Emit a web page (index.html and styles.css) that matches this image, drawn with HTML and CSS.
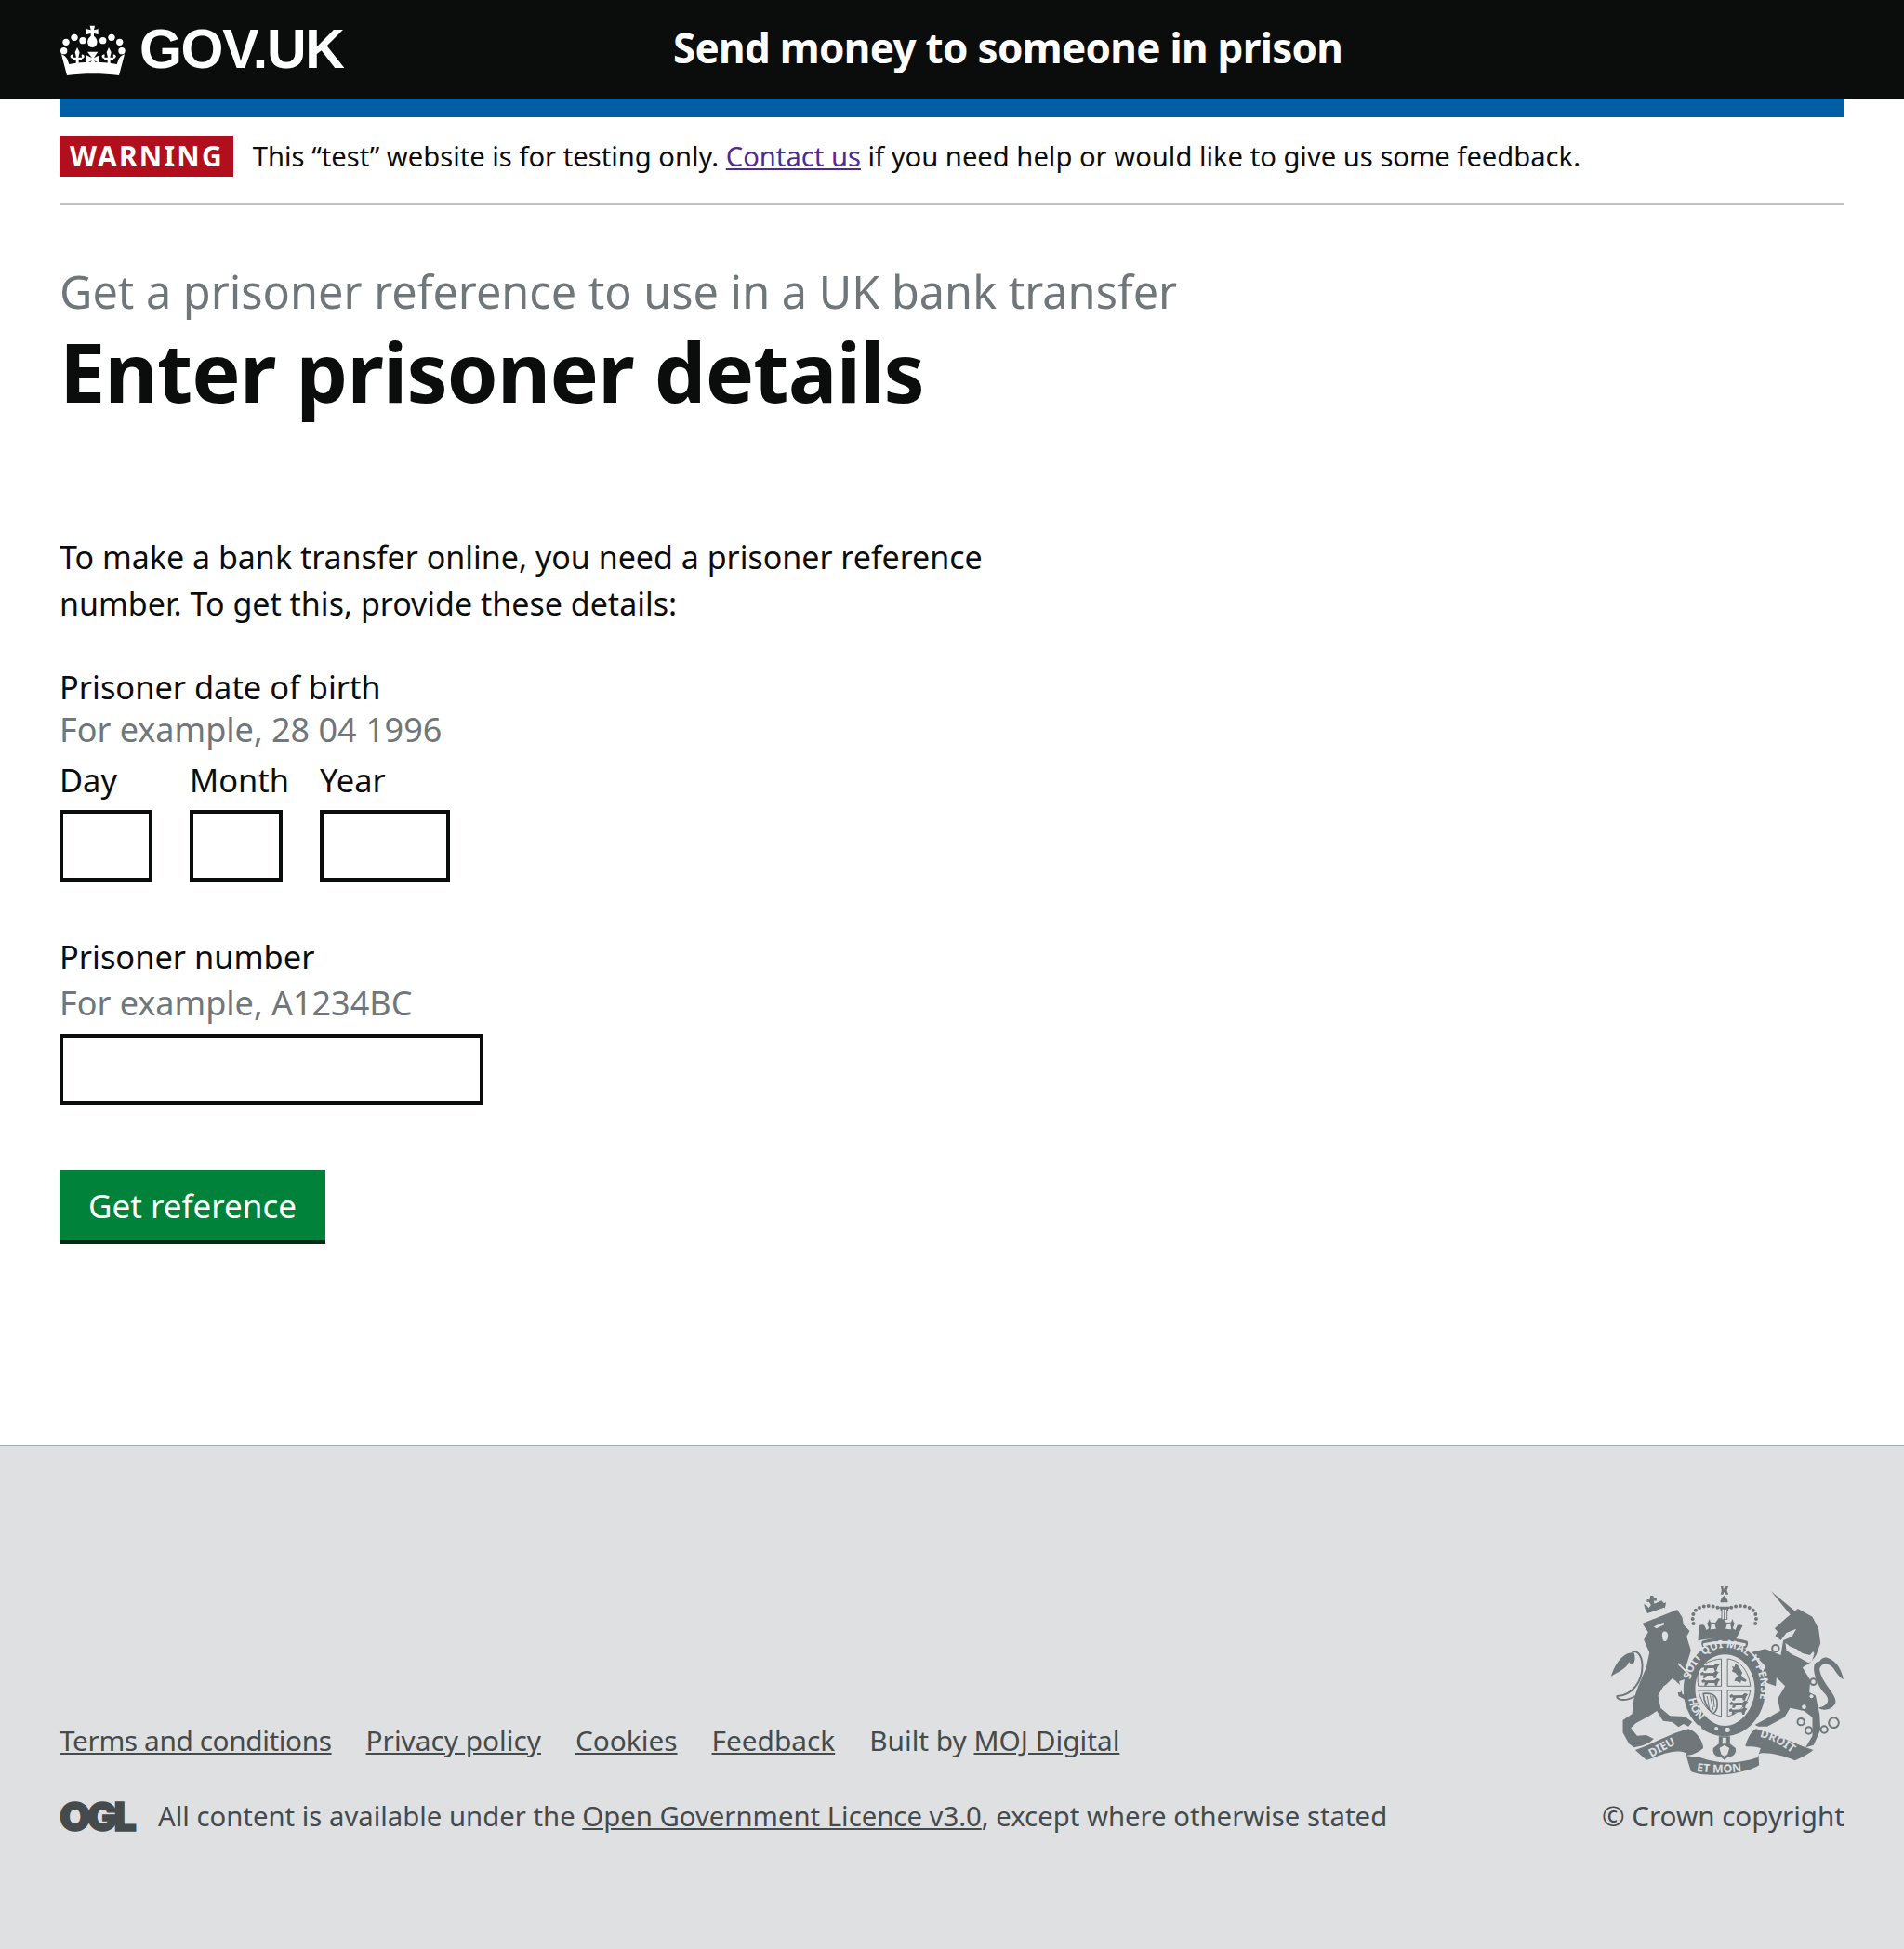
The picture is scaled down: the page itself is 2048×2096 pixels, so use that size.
FILE: index.html
```html
<!DOCTYPE html>
<html lang="en">
<head>
  <meta charset="UTF-8">
  <title>Enter prisoner details - Send money to someone in prison</title>
  <link rel="stylesheet" href="styles.css">
</head>
<body>

  <header class="site-header">
    <a class="logo" href="#">
      <svg class="logo-crown" viewBox="0 0 240 180" aria-hidden="true">
        <g fill="#fff">
          <path d="M110 14h16l-3 14 14-3v17l-14-3v8c8 6 12 14 10 24-2 8-8 13-15 13s-13-5-15-13c-2-10 2-18 10-24v-8l-14 3V25l14 3z"/>
          <circle cx="60" cy="52" r="11"/>
          <circle cx="87" cy="62" r="11"/>
          <circle cx="152" cy="62" r="11"/>
          <circle cx="180" cy="52" r="11"/>
          <circle cx="33" cy="67" r="11"/>
          <circle cx="206" cy="67" r="11"/>
          <circle cx="26" cy="95" r="11"/>
          <circle cx="213" cy="95" r="11"/>
          <!-- fleurs and middle cross -->
          <path d="M69 84l8 16-4 16h11l-1-9c5-2 10 2 9 7-1 4-4 6-7 6l-1 3h-10v14h-9v-14H55l-1-3c-3 0-6-2-7-6-1-5 4-9 9-7l-1 9h11l-4-16z"/>
          <path d="M171 84l8 16-4 16h11l-1-9c5-2 10 2 9 7-1 4-4 6-7 6l-1 3h-10v14h-9v-14h-10l-1-3c-3 0-6-2-7-6-1-5 4-9 9-7l-1 9h11l-4-16z"/>
          <path d="M102 98h34l-13 20 18-9v26l-18-9 11 14h-28l11-14-18 9v-26l18 9z"/>
          <!-- band -->
          <path d="M18 106c12 4 19 12 22 24l3 8c24-5 48-7 76-7s52 2 78 7l3-8c3-12 10-20 22-24l-18 68c-52-7-116-7-168 0z"/>
        </g>
      </svg>
      <span class="logo-text">GOV.UK</span>
    </a>
    <span class="service-name">Send money to someone in prison</span>
  </header>

  <div class="wrapper">
    <div class="phase-bar"></div>
    <div class="phase-banner">
      <strong class="phase-tag">WARNING</strong>
      <span>This “test” website is for testing only. <a href="#">Contact us</a> if you need help or would like to give us some feedback.</span>
    </div>

    <main class="content">
      <span class="caption">Get a prisoner reference to use in a UK bank transfer</span>
      <h1>Enter prisoner details</h1>

      <p class="lede">To make a bank transfer online, you need a prisoner reference number. To get this, provide these details:</p>

      <form>
        <fieldset class="dob">
          <div class="label">Prisoner date of birth</div>
          <div class="hint">For example, 28 04 1996</div>
          <div class="date-fields">
            <label class="date-item"><span>Day</span><input class="input-day" type="text"></label>
            <label class="date-item"><span>Month</span><input class="input-month" type="text"></label>
            <label class="date-item date-item-year"><span>Year</span><input class="input-year" type="text"></label>
          </div>
        </fieldset>

        <div class="number-field">
          <label class="label" for="number">Prisoner number</label>
          <div class="hint hint-number">For example, A1234BC</div>
          <input class="input-number" id="number" type="text">
        </div>

        <button class="button" type="button">Get reference</button>
      </form>
    </main>
  </div>

  <footer class="site-footer">
    <div class="footer-meta">
      <ul class="footer-links">
        <li class="footer-terms"><a href="#">Terms and conditions</a></li>
        <li><a href="#">Privacy policy</a></li>
        <li><a href="#">Cookies</a></li>
        <li><a href="#">Feedback</a></li>
        <li>Built by <a href="#">MOJ Digital</a></li>
      </ul>
      <div class="licence">
        <span class="ogl">OGL</span>
        <span>All content is available under the <a href="#">Open Government Licence v3.0</a>, except where otherwise stated</span>
      </div>
    </div>
    <div class="copyright">
      <svg class="crest" viewBox="100 75 755 615" aria-hidden="true">
        <defs>
          <path id="garter-ring" d="M358 384C368 318 420 276 470 276C530 276 574 322 584 388C590 440 570 490 530 532"/>
          <path id="garter-left" d="M352 440C356 470 370 494 392 510"/>
          <path id="ribbon-left" d="M232 630C262 612 305 590 345 572"/>
          <path id="ribbon-right" d="M582 564C625 572 670 600 704 634"/>
          <path id="ribbon-mid" d="M378 674C430 682 500 682 558 668"/>
          <path id="passant" d="M0 9L8 3L12 8L42 7L50 0L60 5L54 12L50 24H44L42 16H22L16 24H9L11 14L3 15Z"/>
        </defs>
        <g fill="#6f777b">
          <!-- lion -->
          <path d="M203 198L316 153L332 178L336 202L356 222L346 240L360 285L346 330L340 378L322 384L332 425L362 440L346 446L320 432L310 380L272 400L254 430L262 470L292 496L340 498L364 515L352 530L336 522L320 532L300 516L270 512L250 480L226 496L182 520L166 535L186 560L216 558L240 570L226 582L204 592L176 598L160 586L140 550L140 510L170 490L176 440L190 400L216 340L226 292L208 250L222 226Z"/>
          <path d="M176 292C140 288 115 330 102 368C130 352 150 345 160 322C170 340 186 322 176 292Z"/>
          <path d="M229 108h10l1 9 9-1v9l-9-1 2 10 10-4 14-6 6 8 8-2-4 18-56 18-8-16-4-14 8 2 8 10 7-10-6-10-7 1v-9l9 1z"/>
          <!-- unicorn -->
          <path d="M618 93L698 160L685 175Z"/>
          <path d="M630 214L670 178L705 150L752 176L772 215L778 262L764 300L748 322L720 340L745 380L742 420L762 430L775 490L778 540L756 590L730 598L752 560L752 500L725 480L680 470L662 500L606 530L578 530L566 525L612 500L648 480L640 440L664 400L636 372L634 400L606 390L590 360L600 335L566 300L556 290L600 280L650 300L658 252L686 240L700 215L668 228L650 252L632 238L640 224Z"/>
          <path d="M775 320C740 320 762 390 788 420C815 445 800 465 770 470C790 482 815 475 826 455C835 430 780 390 775 345C782 320 810 325 825 350C835 365 845 375 852 378C848 355 835 320 800 308C790 305 780 310 775 320Z"/>
          <!-- crown -->
          <path d="M456 78h8l1 9 8-9h8l-5 13 5 13h-8l-7-8-2 8h-8l3-13z"/>
          <path d="M467 108c8 6 12 12 12 22h-24c0-10 4-16 12-22zM452 143h32v7h-6v36h-20v-36h-6z"/>
          <path d="M386 205c8-4 14-4 18 0l6 14 8-6-4-10c-3-4-1-8 2-10l3-10 4 10c4 2 5 6 2 10l-2 14 18-2-4-14h-10v-7l12 1 10-14 15 0 10 14 12-1v7h-10l-4 14 18 2-2-14c-3-4-2-8 2-10l4-10 3 10c3 2 5 6 2 10l-4 10 8 6 6-14c4-4 10-4 18 0l-24 48c-36-8-88-8-120 0z"/>
          <path d="M396 254c40-14 104-14 146 0 4 6 2 18-6 24-36-12-96-12-134 0-8-6-10-18-6-24z"/>
          <!-- garter ring -->
          <path fill-rule="evenodd" d="M468 258c74 0 132 70 132 154 0 86-62 150-132 150S336 498 336 412c0-84 58-154 132-154zM470 298c-54 0-96 50-96 112 0 62 46 118 96 118s96-56 96-118c0-62-42-112-96-112z"/>
          <!-- ribbons -->
          <path d="M180 606C230 590 300 550 352 538C390 552 400 590 400 600C370 625 355 620 345 625L390 630C450 652 510 652 575 630L585 600C552 590 535 600 536 590C545 565 555 545 570 538C620 548 700 590 755 606C730 625 712 632 696 640C650 620 590 610 578 620L580 655C545 680 420 700 360 675L342 615C300 600 250 630 216 638Z"/>
          <!-- fleur -->
          <path d="M450 562h36v24l18 14c4 16-8 30-22 26l-14 12-14-12c-14 4-26-10-22-26l18-14z"/>
        </g>
        <g fill="none" stroke="#6f777b" stroke-width="6">
          <path d="M180 432C140 455 118 440 122 432C170 430 205 385 203 330C200 290 180 285 170 290"/>
          <circle cx="633" cy="278" r="11"/>
          <circle cx="622" cy="361" r="11"/>
          <circle cx="755" cy="386" r="10"/>
          <circle cx="715" cy="515" r="11"/>
          <circle cx="740" cy="543" r="11"/>
          <circle cx="790" cy="540" r="11"/>
          <circle cx="821" cy="518" r="16"/>
        </g>
        <!-- crown pearls -->
        <g fill="none" stroke="#6f777b" stroke-width="12" stroke-linecap="round" stroke-dasharray="0 15">
          <path d="M368 198C354 150 400 126 462 152"/>
          <path d="M568 198C582 150 536 126 474 152"/>
        </g>
        <g fill="#dee0e2">
          <circle cx="749" cy="433" r="6"/>
          <circle cx="725" cy="467" r="7"/>
          <circle cx="385" cy="535" r="9"/>
          <circle cx="478" cy="541" r="8"/>
          <circle cx="442" cy="537" r="6"/>
          <path d="M665 260l15 12 20 8 20 14 24 6 10-12 4 6-8 28-12 2-28-16-24-10-18-14z"/>
          <path d="M461 152h5v32h-5zM470 152h5v32h-5z"/>
          <path d="M400 262c40-10 96-10 136 0 2 4 1 7-2 9-36-10-96-10-132 0-3-2-4-5-2-9z"/>
          <path d="M240 208l32-14 2 8-26 12zM270 225c8-4 16 0 16 12s-6 20-12 18-10-24-4-30z"/>
          <path d="M212 168l62-22 2 6-60 22z"/>
          <path d="M270 405l30-30 36 30-10 15-30 0-18 20zM320 325l42 40-5 4-40-40z"/>
          <path d="M462 566h12v20h-12zM452 600l16-10 16 10-6 20-10 6-10-6z"/>
        </g>
        <!-- shield quarters -->
        <g fill="none" stroke="#6f777b" stroke-width="3">
          <path d="M458 312C425 315 398 328 384 345C381 365 381 385 384 400H458Z"/>
          <path d="M478 312C515 316 545 345 552 400H478Z"/>
          <path d="M384 414H458V498C420 490 395 460 384 414Z"/>
          <path d="M478 414H552C545 455 515 490 478 498Z"/>
        </g>
        <g fill="#6f777b">
          <use href="#passant" x="392" y="326"/>
          <use href="#passant" x="390" y="350"/>
          <use href="#passant" x="394" y="374"/>
          <use href="#passant" x="484" y="422"/>
          <use href="#passant" x="484" y="446"/>
          <use href="#passant" x="482" y="468"/>
          <path d="M492 336l8 2 4-12 8 8 8 12 6 12-4 6 8 10 10 6-4 6-14-4-2 8-12-6-8 0 4-10 8-6-8-10-12-6 4-8z"/>
        </g>
        <g fill="none" stroke="#6f777b" stroke-width="5">
          <path d="M400 424C440 420 448 440 444 470C440 484 432 490 428 486C412 470 402 450 400 424Z"/>
        </g>
        <path d="M412 432l8 42M422 430l10 48M432 432l4 36" fill="none" stroke="#6f777b" stroke-width="3"/>
        <g class="crest-text">
          <text><textPath href="#garter-ring" startOffset="1%">SOIT QUI MAL Y PENSE</textPath></text>
          <text><textPath href="#garter-left">HONI</textPath></text>
          <text class="ribbon-text"><textPath href="#ribbon-left">DIEU</textPath></text>
          <text class="ribbon-text"><textPath href="#ribbon-right">DROIT</textPath></text>
          <text class="ribbon-text"><textPath href="#ribbon-mid">ET MON</textPath></text>
        </g>
      </svg>
      <div class="copyright-text">© Crown copyright</div>
    </div>
  </footer>

</body>
</html>
```

FILE: styles.css
```css
body {
  margin: 0;
  background: #fff;
  color: #0b0c0c;
  font-family: "Noto Sans", sans-serif;
  font-size: 32px;
}

a {
  color: inherit;
}

.site-header {
  display: flex;
  align-items: center;
  height: 106px;
  padding: 0 64px;
  background: #0b0c0c;
  color: #fff;
}

.logo {
  display: flex;
  align-items: center;
  gap: 10px;
  width: 660px;
  color: #fff;
  text-decoration: none;
}

.logo-crown {
  width: 80px;
  height: 60px;
  margin-left: -4px;
}

.logo-text {
  font-family: "Liberation Sans", sans-serif;
  font-size: 59px;
  font-weight: 700;
  letter-spacing: -1.3px;
  line-height: 1;
}

.service-name {
  padding-bottom: 4px;
  font-size: 44px;
  font-weight: 700;
  letter-spacing: -0.7px;
}

.wrapper {
  margin: 0 64px;
  min-height: 1448px;
}

.phase-bar {
  height: 20px;
  background: #005ea5;
}

.phase-banner {
  display: flex;
  align-items: center;
  gap: 21px;
  height: 94px;
  padding-bottom: 8px;
  border-bottom: 2px solid #bfc1c3;
  box-sizing: border-box;
  font-size: 29.2px;
  line-height: 40px;
}

.phase-banner a {
  color: #4c2c92;
}

.phase-tag {
  padding: 0 10px 0 11px;
  background: #b10e1e;
  color: #fff;
  font-size: 30px;
  font-weight: 700;
  letter-spacing: 2.2px;
  line-height: 44px;
}

.content {
  padding-top: 61px;
}

.caption {
  display: block;
  color: #6f777b;
  font-size: 48.6px;
  line-height: 64px;
}

h1 {
  margin: 9px 0 0;
  font-size: 88px;
  line-height: 90px;
  font-weight: 700;
  letter-spacing: -0.8px;
}

.lede {
  width: 1060px;
  margin: 130px 0 0;
  font-size: 34px;
  line-height: 50px;
}

fieldset {
  margin: 0;
  padding: 0;
  border: 0;
}

.dob {
  margin-top: 42px;
}

.label {
  display: block;
  font-size: 34.4px;
  line-height: 46px;
}

.hint {
  color: #6f777b;
  font-size: 36px;
  line-height: 46px;
}

.date-fields {
  display: flex;
  gap: 40px;
  margin-top: 8px;
}

.date-item {
  width: 100px;
}

.date-item-year {
  width: 140px;
}

.date-item span {
  display: block;
  margin-bottom: 9px;
  font-size: 34.4px;
  line-height: 46px;
  white-space: nowrap;
}

input {
  display: block;
  box-sizing: border-box;
  height: 76px;
  border: 4px solid #0b0c0c;
  border-radius: 0;
  background: #fff;
}

.input-day,
.input-month,
.input-year {
  height: 77px;
}

.input-day,
.input-month {
  width: 100px;
}

.input-year {
  width: 140px;
}

.number-field {
  margin-top: 58px;
}

.hint-number {
  margin-top: 4px;
  margin-bottom: 10px;
}

.input-number {
  width: 456px;
}

.button {
  display: block;
  width: 286px;
  height: 80px;
  margin-top: 70px;
  padding: 0;
  border: 0;
  border-bottom: 4px solid #002d18;
  border-radius: 0;
  background: #00823b;
  color: #fff;
  font-family: inherit;
  font-size: 35px;
}

.site-footer {
  display: flex;
  justify-content: space-between;
  align-items: flex-end;
  box-sizing: border-box;
  height: 542px;
  padding: 0 64px 123px;
  border-top: 1px solid #a1acb2;
  background: #dee0e2;
  color: #454a4c;
  font-size: 29.3px;
}

.footer-links {
  display: flex;
  gap: 37px;
  margin: 0 0 41px;
  padding: 0;
  list-style: none;
  font-size: 29.8px;
}

.footer-terms {
  letter-spacing: -0.4px;
}

.licence {
  display: flex;
  align-items: center;
  gap: 25px;
}

.ogl {
  width: 81px;
  font-family: "Inter", sans-serif;
  font-size: 43px;
  font-weight: 900;
  letter-spacing: -3.6px;
  line-height: 40px;
  -webkit-text-stroke: 1.5px #454a4c;
}

.copyright {
  display: flex;
  flex-direction: column;
  align-items: flex-end;
  font-size: 29.6px;
}

.crest {
  display: block;
  width: 252px;
  height: 205px;
  margin-bottom: 22px;
  overflow: visible;
}

.crest-text {
  fill: #dee0e2;
  font-family: "Noto Sans", sans-serif;
  font-size: 35px;
  font-weight: 700;
}

.ribbon-text {
  font-size: 37px;
}
```
